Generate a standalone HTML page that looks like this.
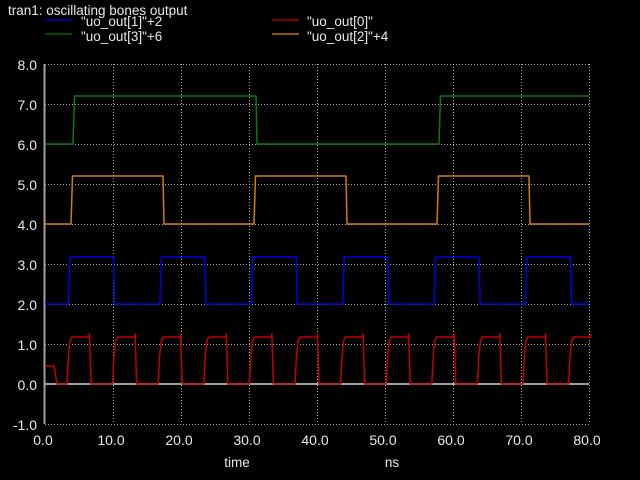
<!DOCTYPE html>
<html><head><meta charset="utf-8"><style>
html,body{margin:0;padding:0;background:#000;}
svg{display:block;font-family:"Liberation Sans",sans-serif;}
</style></head><body>
<svg id="s" width="640" height="480" viewBox="0 0 640 480" xmlns="http://www.w3.org/2000/svg">
<rect width="640" height="480" fill="#000"/>
<text x="8" y="15" fill="#e8e8e8" font-size="13.5">tran1: oscillating bones output</text>
<line x1="45" y1="20" x2="72" y2="20" stroke="#0000c0" stroke-width="1.5"/>
<line x1="45" y1="34" x2="72" y2="34" stroke="#006000" stroke-width="1.5"/>
<line x1="272" y1="20" x2="299" y2="20" stroke="#a00000" stroke-width="1.5"/>
<line x1="272" y1="34" x2="299" y2="34" stroke="#c07000" stroke-width="1.5"/>
<g fill="#e8e8e8" font-size="13.5">
<text x="81" y="26">"uo_out[1]"+2</text>
<text x="81" y="41">"uo_out[3]"+6</text>
<text x="307" y="26">"uo_out[0]"</text>
<text x="307" y="41">"uo_out[2]"+4</text>
</g>
<g id="grid" stroke="#b0b0b0" stroke-width="1" stroke-dasharray="1,2"></g>
<line x1="45" y1="384" x2="589" y2="384" stroke="#a0a0a0" stroke-width="2"/>
<line x1="44.5" y1="64" x2="44.5" y2="424" stroke="#a0a0a0" stroke-width="2"/>
<g id="lbl" fill="#e8e8e8" font-size="14"></g>
<text x="237" y="467" fill="#e8e8e8" font-size="13.5" text-anchor="middle">time</text>
<text x="392" y="467" fill="#e8e8e8" font-size="13.5" text-anchor="middle">ns</text>
<g id="w" fill="none" stroke-width="1.5" stroke-linejoin="round"></g>
</svg>
<script>
var NS="http://www.w3.org/2000/svg";
function el(p,t,a,txt){var e=document.createElementNS(NS,t);for(var k in a)e.setAttribute(k,a[k]);if(txt)e.textContent=txt;document.getElementById(p).appendChild(e);}
for(var i=0;i<=8;i++){var x=45+68*i;if(i>0)el("grid","line",{x1:x+.5,y1:64,x2:x+.5,y2:424});
 el("lbl","text",{x:x-2,y:445,"text-anchor":"middle"},(i*10).toFixed(1));}
for(var j=0;j<=9;j++){var y=64+40*j;if(j!=8)el("grid","line",{x1:45,y1:y+.5,x2:589,y2:y+.5});
 el("lbl","text",{x:37,y:y+6,"text-anchor":"end"},(8-j).toFixed(1));}
function sq(rises,falls,lo,hi,start,col){
 var p="M45,"+(start?hi:lo);var ev=[];
 rises.forEach(function(r){ev.push([r,1]);});falls.forEach(function(f){ev.push([f,0]);});
 ev.sort(function(a,b){return a[0]-b[0];});
 ev.forEach(function(e){if(e[1]){p+=" L"+e[0]+","+lo+" L"+(e[0]+1.5)+","+hi;}else{p+=" L"+e[0]+","+hi+" L"+(e[0]+1)+","+lo;}});
 var last=ev.length?ev[ev.length-1][1]:start;p+=" L589,"+(last?hi:lo);
 el("w","path",{d:p,stroke:col});}
var br=[],bf=[];for(var k=0;k<6;k++){br.push(68.5+91.4*k);bf.push(113.5+91.4*k);}
sq(br,bf,304,257,0,"#0000e0");
sq([71,254,437],[163,346,529],224,176,0,"#d08000");
sq([73,439],[256],144,96,0,"#0a7a0a");
var p="M45,366 L54,366 L57,384 L66,384";
for(var k=0;k<12;k++){var r=67+45.6*k;
 p+=" L"+r+",384 L"+(r+1.5)+",355 L"+(r+3)+",341 L"+(r+5)+",337 L"+(r+22)+",337 L"+(r+22.5)+",334";
 if(r+23<589)p+=" L"+(r+24)+",384 L"+Math.min(r+45,589)+",384";}
el("w","path",{d:p,stroke:"#c00000"});
</script>
</body></html>
